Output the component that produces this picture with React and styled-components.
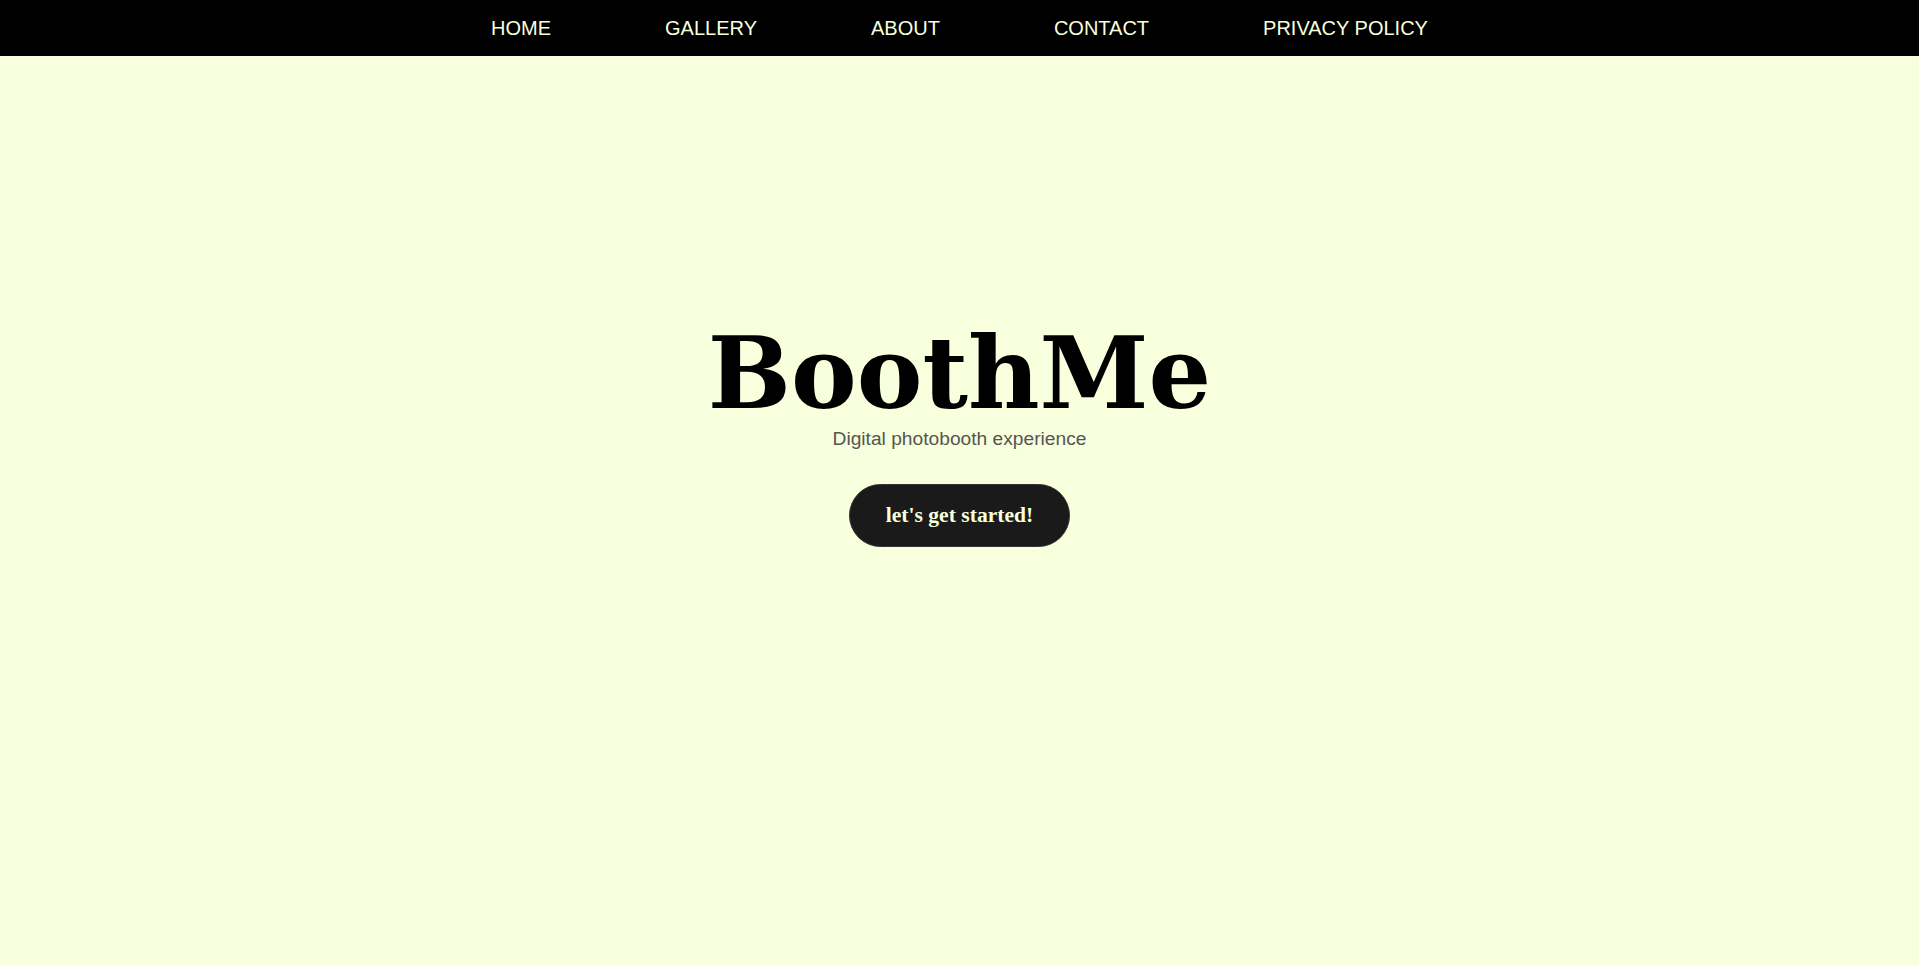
import styled, { createGlobalStyle } from "styled-components";

const GlobalStyle = createGlobalStyle`
  html, body {
    margin: 0;
    padding: 0;
    background: #f8ffdd;
  }

  * {
    box-sizing: border-box;
  }
`;

const StyledNavbar = styled.nav`
  height: 56px;
  background: #000;
  display: flex;
  align-items: center;
  justify-content: center;
`;

const StyledList = styled.ul`
  display: flex;
  flex-direction: row;
  gap: 114px;
  list-style-type: none;
  margin: 0;
  padding: 0;
`;

const StyledListItem = styled.li`
  a {
    font-family: "Liberation Sans", Arial, sans-serif;
    font-size: 20px;
    color: #f8ffdd;
    text-decoration: none;
    text-transform: uppercase;
  }
`;

const Hero = styled.main`
  min-height: calc(100vh - 56px);
  display: flex;
  flex-direction: column;
  align-items: center;
  padding-top: 264px;
`;

const Title = styled.h1`
  margin: 0;
  font-family: "DejaVu Serif", Georgia, serif;
  font-weight: bold;
  font-size: 98.5px;
  line-height: 1.1;
  color: #000;
`;

const Subtitle = styled.p`
  margin: 0;
  font-family: "Liberation Sans", Arial, sans-serif;
  font-size: 19.2px;
  color: #555;
`;

const StartButton = styled.button`
  margin-top: 34px;
  padding: 18px 36px;
  border: 1px solid #333;
  border-radius: 999px;
  background: #1a1a1a;
  color: #f8ffdd;
  font-family: "Liberation Serif", "Times New Roman", serif;
  font-weight: bold;
  font-size: 21.6px;
  cursor: pointer;
`;

const links = ["Home", "Gallery", "About", "Contact", "Privacy Policy"];

const App = () => {
  return (
    <>
      <GlobalStyle />
      <StyledNavbar>
        <StyledList>
          {links.map((label) => (
            <StyledListItem key={label}>
              <a href="#">{label}</a>
            </StyledListItem>
          ))}
        </StyledList>
      </StyledNavbar>
      <Hero>
        <Title>BoothMe</Title>
        <Subtitle>Digital photobooth experience</Subtitle>
        <StartButton>let's get started!</StartButton>
      </Hero>
    </>
  );
};

export default App;
